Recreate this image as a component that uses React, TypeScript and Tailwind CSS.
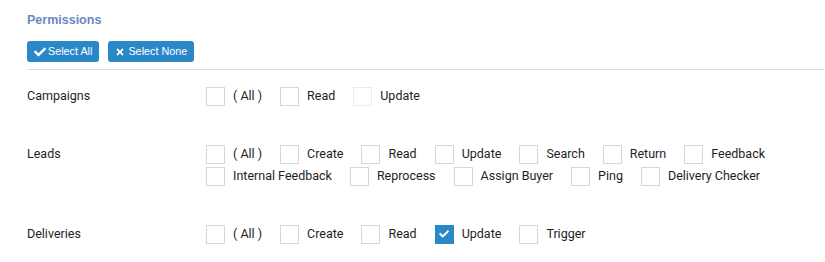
import React from 'react';
import { FaCheck, FaTimes } from 'react-icons/fa';

interface PermItem {
  label: string;
  checked?: boolean;
  disabled?: boolean;
}

interface PermRow {
  name: string;
  items: PermItem[];
}

const rows: PermRow[] = [
  {
    name: 'Campaigns',
    items: [{ label: '( All )' }, { label: 'Read' }, { label: 'Update', disabled: true }],
  },
  {
    name: 'Leads',
    items: [
      { label: '( All )' },
      { label: 'Create' },
      { label: 'Read' },
      { label: 'Update' },
      { label: 'Search' },
      { label: 'Return' },
      { label: 'Feedback' },
      { label: 'Internal Feedback' },
      { label: 'Reprocess' },
      { label: 'Assign Buyer' },
      { label: 'Ping' },
      { label: 'Delivery Checker' },
    ],
  },
  {
    name: 'Deliveries',
    items: [
      { label: '( All )' },
      { label: 'Create' },
      { label: 'Read' },
      { label: 'Update', checked: true },
      { label: 'Trigger' },
    ],
  },
];

const Checkbox: React.FC<PermItem> = ({ label, checked, disabled }) => {
  return (
    <label className="flex items-center h-[22px] pr-[18px] cursor-pointer">
      {checked ? (
        <span className="w-[19px] h-[19px] bg-[#2b88c8] flex items-center justify-center">
          <FaCheck className="text-white" size={10} />
        </span>
      ) : (
        <span
          className={
            disabled
              ? 'w-[19px] h-[19px] border border-[#ecebe8] bg-white'
              : 'w-[19px] h-[19px] border border-[#dad7d2] bg-white'
          }
        />
      )}
      <span className="pl-[8px] text-[#1e1e1e] whitespace-nowrap">{label}</span>
    </label>
  );
};

export default function App() {
  return (
    <div className="bg-white min-h-[262px] pl-[27px] pt-[11px] font-['Roboto',sans-serif] text-[12.5px]">
      <div className="font-['Liberation_Sans',Arial,sans-serif] font-bold text-[12.5px] leading-[18px] text-[#6c87c4]">
        Permissions
      </div>

      <div className="flex gap-[9px] mt-[12px] font-['Liberation_Sans',Arial,sans-serif] text-[10.8px] text-white">
        <button className="h-[21px] flex items-center gap-[2px] px-[7px] rounded-[3px] bg-[#2b88c8] whitespace-nowrap">
          <FaCheck className="shrink-0" size={12} />
          <span>Select All</span>
        </button>
        <button className="h-[21px] flex items-center gap-[3px] px-[7px] rounded-[3px] bg-[#2b88c8] whitespace-nowrap">
          <FaTimes className="shrink-0" size={10} />
          <span>Select None</span>
        </button>
      </div>

      <div className="mt-[7px] h-px bg-[#dedede]" />

      <div className="mt-[15px] flex flex-col gap-[36px]">
        {rows.map((row) => (
          <div key={row.name} className="flex">
            <div className="w-[179px] shrink-0 h-[22px] flex items-center text-[#1e1e1e]">{row.name}</div>
            <div className="flex flex-wrap flex-1">
              {row.items.map((item, i) => (
                <Checkbox key={i} {...item} />
              ))}
            </div>
          </div>
        ))}
      </div>
    </div>
  );
}
